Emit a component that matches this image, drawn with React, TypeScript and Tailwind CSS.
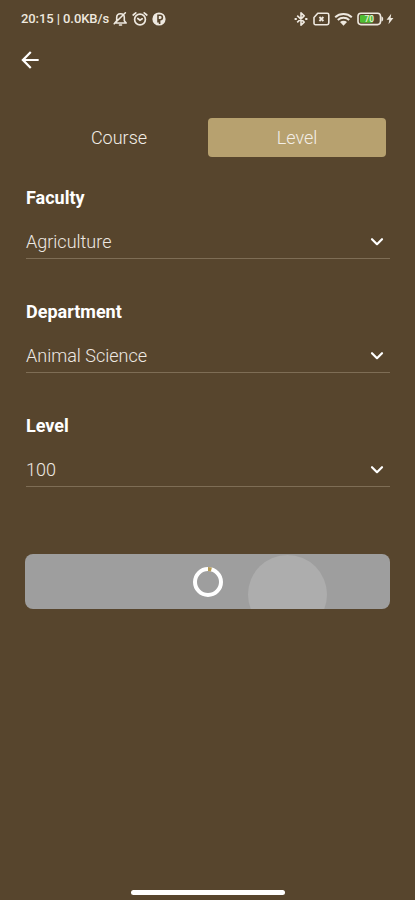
import { useState } from "react";
import { MdArrowBack } from "react-icons/md";

const fields = [
  { label: "Faculty", value: "Agriculture" },
  { label: "Department", value: "Animal Science" },
  { label: "Level", value: "100" },
];

const tabs = ["Course", "Level"];

// System status bar: clock and network speed on the left, device state on the right
function StatusBar() {
  return (
    <div className="flex h-[38px] items-center justify-between pl-[21px] pr-[21px] text-[#eee8df]">
      <div className="flex items-center">
        <span className="w-[89px] whitespace-nowrap text-[13px] font-medium tracking-[-0.08px]">
          20:15 | 0.0KB/s
        </span>
        {/* Muted bell */}
        <svg className="ml-[3px]" width="15" height="16" viewBox="0 0 15 16" fill="none" stroke="currentColor" strokeWidth="1.6" strokeLinecap="round" strokeLinejoin="round">
          <path d="M1.8 12 3.7 9.8V6.4C3.7 4.1 5.3 2.7 7.5 2.7s3.8 1.4 3.8 3.7v3.4l1.9 2.2ZM6.5 14h2M1.2 12.8 12.4 1.8" />
        </svg>
        {/* Alarm clock */}
        <svg className="ml-[4px]" width="16" height="16" viewBox="0 0 16 16" fill="none" stroke="currentColor" strokeWidth="1.7" strokeLinecap="round">
          <circle cx="8" cy="8.5" r="5.4" />
          <path d="M1.2 4 3.8 1.8M14.8 4 12.2 1.8M5.8 7.5 8 9.2 10.2 7.8" />
        </svg>
        {/* App notification badge */}
        <svg className="ml-[4px]" width="14" height="14" viewBox="0 0 14 14">
          <circle cx="7" cy="7" r="6.6" fill="currentColor" />
          <path d="M6 10.6V3.3h2.2a2.2 2.2 0 0 1 0 4.4H7.6V12" fill="none" stroke="#57452d" strokeWidth="1.6" />
        </svg>
      </div>
      <div className="flex items-center">
        {/* Bluetooth */}
        <svg width="14" height="16" viewBox="0 0 14 16" fill="none" stroke="currentColor" strokeWidth="1.6" strokeLinejoin="round">
          <path d="m3.2 4.7 7 6.5L7 14.2V1.8l3.2 3-7 6.5" />
          <path d="M.6 8h2.2M11.2 8h2.2" strokeWidth="2" />
        </svg>
        {/* Missing SIM */}
        <svg className="ml-[5px]" width="17" height="14" viewBox="0 0 17 14" fill="none" stroke="currentColor" strokeWidth="1.6" strokeLinejoin="round">
          <path d="M4.8 1.3h9.4a1.6 1.6 0 0 1 1.6 1.6v8.2a1.6 1.6 0 0 1-1.6 1.6H2.4a1.4 1.4 0 0 1-1.4-1.4V5.5Z" />
          <path d="m6.4 5 4 4M10.4 5l-4 4" strokeWidth="1.8" />
        </svg>
        {/* Wi-Fi */}
        <svg className="ml-[4px]" width="19" height="15" viewBox="0 0 19 15" fill="none" stroke="currentColor" strokeWidth="2">
          <path d="M1.2 5.2c4.7-4.3 11.9-4.3 16.6 0M3.8 8c3.3-2.9 8.1-2.9 11.4 0" />
          <path d="M6 10.1c2-1.7 5-1.7 7 0l-3.5 3.7Z" fill="currentColor" stroke="none" />
        </svg>
        {/* Battery */}
        <svg className="ml-[4px]" width="27" height="14" viewBox="0 0 27 14">
          <rect x="1" y="1.2" width="22.5" height="11.4" rx="3" fill="none" stroke="currentColor" strokeWidth="1.6" />
          <path d="M24.4 4.2c2.4.6 2.4 4.8 0 5.4Z" fill="currentColor" />
          <rect x="3" y="3" width="13" height="7.8" rx="1.2" fill="#4fbd32" />
          <text x="12.3" y="10" textAnchor="middle" fontSize="8.5" fontWeight="500" fill="#e6efd8">
            70
          </text>
        </svg>
        <svg className="ml-[2px]" width="8" height="12" viewBox="0 0 8 12" fill="currentColor">
          <path d="M5.2.8.6 6.7h2.7L2.5 11.2 7.4 5.1H4.6Z" />
        </svg>
      </div>
    </div>
  );
}

function SelectField({ label, value }: { label: string; value: string }) {
  return (
    <div className="h-[114px]">
      <p className="text-[18px] font-bold leading-[22px] text-white">{label}</p>
      <button className="mt-[18px] flex h-[32px] w-full items-center justify-between border-b border-[#7e6d55] pb-[2px] pr-[6px] text-left">
        <span className="text-[18px] font-light leading-[22px] text-[#eee9e3]">{value}</span>
        <svg width="14" height="10" viewBox="0 0 14 10" fill="none" stroke="white" strokeWidth="2.2" strokeLinecap="round" strokeLinejoin="round">
          <path d="M2 2.2 7 7.2l5-5" />
        </svg>
      </button>
    </div>
  );
}

export default function App() {
  const [activeTab, setActiveTab] = useState("Level");

  return (
    <div className="flex h-[900px] w-[415px] flex-col overflow-hidden bg-[#57452d] font-['Roboto',sans-serif]">
      <StatusBar />

      <header className="flex h-[43px] items-center pl-[17px] text-white">
        <button aria-label="Back">
          <MdArrowBack size={26} />
        </button>
      </header>

      <div className="ml-[30px] mt-[37px] flex h-[39px] w-[356px]">
        {tabs.map((tab) => (
          <button
            key={tab}
            onClick={() => setActiveTab(tab)}
            className={`flex-1 rounded-[4px] pb-[1px] text-[18px] font-light text-[#f3eee7] ${
              activeTab === tab ? "bg-[#b7a16f]" : ""
            }`}
          >
            {tab}
          </button>
        ))}
      </div>

      <div className="mx-[25px] mt-[30px] pl-[1px]">
        {fields.map((field) => (
          <SelectField key={field.label} label={field.label} value={field.value} />
        ))}
      </div>

      {/* Submit button in its loading state, with the touch ripple */}
      <button className="relative ml-[25px] mt-[25px] flex h-[55px] w-[365px] items-center justify-center overflow-hidden rounded-[8px] bg-[#9e9e9e]">
        <span className="absolute left-[223px] top-[1px] size-[79px] rounded-full bg-[#adadad]" />
        <svg className="relative" width="32" height="32" viewBox="0 0 32 32" fill="none" strokeWidth="4">
          <circle cx="16" cy="16" r="13" stroke="white" />
          <path d="M16 3a13 13 0 0 1 3.4.45" stroke="#b59b55" />
        </svg>
      </button>

      <div className="mb-[5px] ml-[131px] mt-auto h-[5px] w-[154px] rounded-full bg-white" />
    </div>
  );
}
